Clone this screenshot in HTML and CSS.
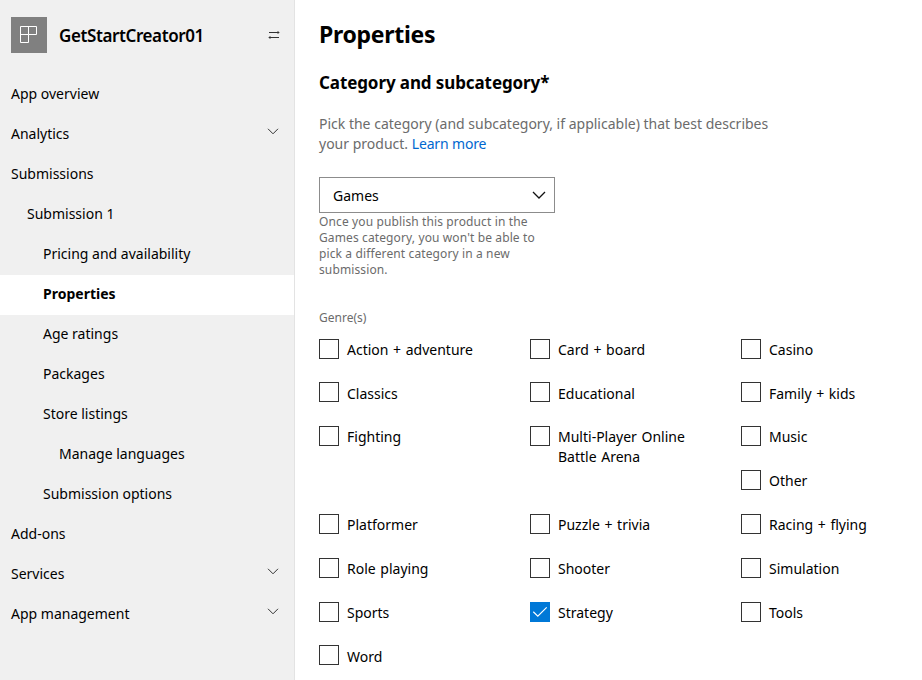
FILE: index.html
```html
<!DOCTYPE html>
<html lang="en">
<head>
<meta charset="utf-8">
<title>Properties</title>
<link rel="stylesheet" href="styles.css">
</head>
<body>
<div class="app">
  <aside class="sidebar">
    <header class="product">
      <span class="tile"><svg width="18" height="18" viewBox="0 0 18 18" fill="none" stroke="#fff"><path d="M.5.5h16v8h-8v8h-8zM8.500.5v8M.5 8.500h8"/></svg></span>
      <span class="product-name">GetStartCreator01</span>
      <svg class="swap" width="12" height="10" viewBox="0 0 12 10" fill="none" stroke="#333"><path d="M1 2.500h10M1 7.500h10"/><path d="M9.500 1 11 2.500 9.500 4M2.500 6 1 7.500 2.500 9" stroke-width=".8"/></svg>
    </header>
    <nav class="menu">
      <a class="item"><span>App overview</span></a>
      <a class="item"><span>Analytics</span><svg class="chevron" width="12" height="7" viewBox="0 0 12 7"><path d="M1 .8 6 5.800 11 .8"/></svg></a>
      <a class="item"><span>Submissions</span></a>
      <a class="item level-1"><span>Submission 1</span></a>
      <a class="item level-2"><span>Pricing and availability</span></a>
      <a class="item level-2 current"><span>Properties</span></a>
      <a class="item level-2"><span>Age ratings</span></a>
      <a class="item level-2"><span>Packages</span></a>
      <a class="item level-2"><span>Store listings</span></a>
      <a class="item level-3"><span>Manage languages</span></a>
      <a class="item level-2"><span>Submission options</span></a>
      <a class="item"><span>Add-ons</span></a>
      <a class="item"><span>Services</span><svg class="chevron" width="12" height="7" viewBox="0 0 12 7"><path d="M1 .8 6 5.800 11 .8"/></svg></a>
      <a class="item"><span>App management</span><svg class="chevron" width="12" height="7" viewBox="0 0 12 7"><path d="M1 .8 6 5.800 11 .8"/></svg></a>
    </nav>
  </aside>
  <main class="content">
    <h1>Properties</h1>
    <h2>Category and subcategory*</h2>
    <p class="intro">Pick the category (and subcategory, if applicable) that best describes<br>your product. <a class="link">Learn more</a></p>
    <div class="select"><span>Games</span><svg width="14" height="8" viewBox="0 0 14 8" fill="none" stroke="#111" stroke-width="1.300"><path d="M1 1 7 7 13 1"/></svg></div>
    <p class="hint">Once you publish this product in the<br>Games category, you won't be able to<br>pick a different category in a new<br>submission.</p>
    <p class="legend">Genre(s)</p>
    <div class="genres">
      <label class="genre"><i class="box"></i><span>Action + adventure</span></label>
      <label class="genre"><i class="box"></i><span>Card + board</span></label>
      <label class="genre"><i class="box"></i><span>Casino</span></label>
      <label class="genre"><i class="box"></i><span>Classics</span></label>
      <label class="genre"><i class="box"></i><span>Educational</span></label>
      <label class="genre"><i class="box"></i><span>Family + kids</span></label>
      <label class="genre"><i class="box"></i><span>Fighting</span></label>
      <label class="genre"><i class="box"></i><span>Multi-Player Online<br>Battle Arena</span></label>
      <label class="genre"><i class="box"></i><span>Music</span></label>
      <label class="genre last-column"><i class="box"></i><span>Other</span></label>
      <label class="genre"><i class="box"></i><span>Platformer</span></label>
      <label class="genre"><i class="box"></i><span>Puzzle + trivia</span></label>
      <label class="genre"><i class="box"></i><span>Racing + flying</span></label>
      <label class="genre"><i class="box"></i><span>Role playing</span></label>
      <label class="genre"><i class="box"></i><span>Shooter</span></label>
      <label class="genre"><i class="box"></i><span>Simulation</span></label>
      <label class="genre"><i class="box"></i><span>Sports</span></label>
      <label class="genre"><i class="box checked"><svg width="20" height="20" viewBox="0 0 20 20" fill="none" stroke="#fff" stroke-width="1.200"><path d="M3.300 9.800 7.800 14.200 16.700 5.300"/></svg></i><span>Strategy</span></label>
      <label class="genre"><i class="box"></i><span>Tools</span></label>
      <label class="genre"><i class="box"></i><span>Word</span></label>
    </div>
  </main>
</div>
</body>
</html>
```
FILE: styles.css
```css
* { box-sizing: border-box; }
body {
  margin: 0;
  background: #fff;
  color: #000;
  font: 14px/20px "Segoe UI", "Noto Sans", sans-serif;
  overflow: hidden;
}
h1, h2, p { margin: 0; white-space: nowrap; }
.app { display: flex; height: 680px; }
.sidebar {
  width: 295px;
  flex: none;
  background: #f0f0f0;
  border-right: 1px solid #e3e3e3;
}
.product {
  display: flex;
  align-items: center;
  height: 75px;
  padding: 0 14px 5px 11px;
}
.tile {
  display: flex;
  width: 36px;
  height: 36px;
  padding: 9px;
  background: #808080;
}
.product-name { margin-left: 12px; padding-top: 2px; font-size: 17px; font-weight: 600; letter-spacing: -.4px; }
.swap { margin-left: auto; }
.item {
  display: flex;
  align-items: center;
  justify-content: space-between;
  height: 40px;
  padding: 0 15px 2px 11px;
}
.level-1 { padding-left: 27px; }
.level-2 { padding-left: 43px; }
.level-3 { padding-left: 59px; }
.current { background: #fff; font-weight: 700; }
.chevron { fill: none; stroke: #333; margin-bottom: 5px; }
.content { flex: 1; padding: 19px 0 0 24px; }
h1 { font-size: 23px; line-height: 30px; font-weight: 700; letter-spacing: -.3px; }
h2 { margin-top: 22px; font-size: 17px; line-height: 24px; font-weight: 700; letter-spacing: -.1px; }
.intro { margin-top: 19px; color: #6b6b6b; }
.link { color: #0067d0; letter-spacing: -.15px; }
.select {
  display: flex;
  align-items: center;
  justify-content: space-between;
  width: 236px;
  height: 36px;
  margin-top: 23px;
  padding: 0 8px 0 13px;
  border: 1px solid #8c8c8c;
}
.select span { padding-top: 2px; }
.hint { padding-top: 1px; font-size: 12px; line-height: 16px; letter-spacing: .12px; color: #6b6b6b; }
.legend { margin-top: 32px; font-size: 12px; line-height: 16px; color: #6b6b6b; }
.genres {
  display: grid;
  grid-template-columns: repeat(3, 211px);
  grid-auto-rows: 43.84px;
  margin-top: 12.6px;
}
.genre { display: flex; align-items: flex-start; gap: 8px; white-space: nowrap; word-spacing: 1px; }
.genre span { padding-top: 1.2px; }
.last-column { grid-column: 3; }
.box { width: 20px; height: 20px; border: 1px solid #333; flex: none; }
.checked { border: 0; background: #0078d7; }
.checked svg { display: block; }
```
